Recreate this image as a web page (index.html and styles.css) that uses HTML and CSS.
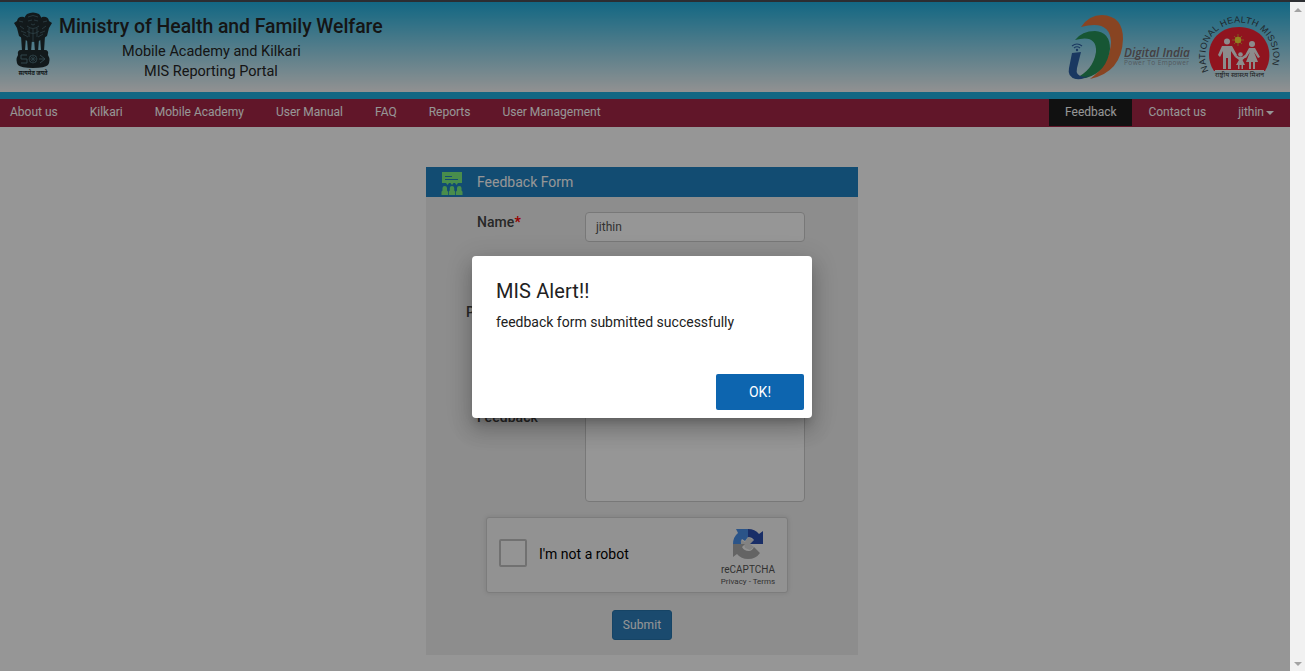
FILE: index.html
```html
<!DOCTYPE html>
<html lang="en">
<head>
<meta charset="utf-8">
<title>MIS Reporting Portal</title>
<link rel="stylesheet" href="styles.css">
</head>
<body>
<div class="window">
  <div class="topline"></div>
  <div class="viewport">
    <div class="page">
      <header class="masthead">
        <svg class="emblem" width="38" height="66" viewBox="0 0 38 66">
          <g fill="#202b2e">
            <path d="M13 2Q19-1 25 2Q28 5 28 11L29 27Q19 33 9 27L10 11Q9 6 13 2Z"/>
            <path d="M10 5Q4 4 3 9L0 11L3 16L5 24L11 28L13 8ZM28 5Q34 4 35 9L38 11L35 16L33 24L27 28L25 8Z"/>
            <path d="M7 24H12L11 39H8ZM13 27H18L17 40H14ZM20 27H25L24 40H21ZM26 24H31L30 39H27Z"/>
            <path d="M7 38H31Q35 38 34 43Q37 48 34 53Q31 56 19 56Q7 56 4 53Q1 48 4 43Q3 38 7 38Z"/>
          </g>
          <g fill="none" stroke="#527681" stroke-width=".7">
            <path d="M14 5Q19 2 24 5M14 9L18 8M20 8L24 9M17 12Q19 14 21 12M13 14Q19 19 25 14M13 19Q19 24 25 19M15 16V25M23 16V25M5 9L9 10M6 14L10 17M33 9L29 10M32 14L28 17M9 22L14 25M29 22L24 25M19 17V30M7 19L12 21M31 19L26 21"/>
            <path stroke-width="1" d="M13 43H7V47H13V51H7M26 43L31 47M26 51L31 47H25"/><circle cx="19" cy="47" r="4"/><path d="M15 47H23M19 43V51M16 44L22 50M22 44L16 50"/>
          </g>
          <text x="4.500" y="63" class="motto" textLength="29" lengthAdjust="spacingAndGlyphs">सत्यमेव जयते</text>
        </svg>
        <div class="titles">
          <div class="ministry">Ministry of Health and Family Welfare</div>
          <div class="academy">Mobile Academy and Kilkari</div>
          <div class="portal">MIS Reporting Portal</div>
        </div>
        <svg class="digital" width="124" height="68" viewBox="0 0 124 68">
          <path fill="#e8743b" d="M13 13Q21 1 34 1Q55 2 55 25Q54 58 22 65Q42 50 43 28Q42 5 13 13Z"/>
          <path fill="#279259" d="M7 26Q14 17 27 17Q42 18 42 35Q39 58 18 64L6 65Q25 57 28 38Q29 20 7 26Z"/>
          <path fill="#2d60a5" d="M4 39L13 38L9 54Q7 62 16 63L22 61Q15 66 8 65Q-1 63 1 54Z"/>
          <g fill="none" stroke="#2d60a5" stroke-width="1.200"><path d="M4 32Q9 28 14 32M6 34Q9 31.500 12 34"/></g><circle cx="9" cy="36" r="1.200" fill="#2d60a5"/>
          <text x="56" y="42.500" class="di-name" textLength="66" lengthAdjust="spacingAndGlyphs">Digital India</text>
          <path d="M56 44.500H121" stroke="#746b70" stroke-width=".5"/>
          <text x="56" y="51" class="di-tag" textLength="65">Power To Empower</text>
        </svg>
        <svg class="nhm" width="82" height="64" viewBox="0 0 82 64">
          <defs><path id="arc" d="M9.500 54A34 34 0 1 1 71 54"/></defs>
          <path fill="#f52335" d="M15 54C3 36 13 10 40 10S77 36 66 54Z"/>
          <path d="M16 53.500H65" stroke="#eee" stroke-width="1"/>
          <text class="nhm-arc"><textPath href="#arc" textLength="130">NATIONAL HEALTH MISSION</textPath></text>
          <path d="M39 17V29M33 23H45M35 19L43 27M43 19L35 27" stroke="#d5b735" stroke-width=".8"/><circle cx="39" cy="23" r="3.200" fill="#f6dc35"/>
          <g fill="#efefef">
            <circle cx="28" cy="24.500" r="3"/><path d="M23 29H33L38 38L36 40L32 34V52H29V41H27V52H24V34L21 40L19 38Z"/>
            <circle cx="53" cy="27" r="3"/><path d="M50 31H56L61 40L59 41L55 35L59 45H56V52H54V45H52V52H50V45H47L51 35L47 41L45 40Z"/>
            <circle cx="41.500" cy="37.500" r="2.300"/><path d="M40 40H43L46 38L47 40L43.500 43L46 48H44V52H42.500V48H40.500V52H39V48H37L40 43L36 40L37 38Z"/>
          </g>
          <text x="16" y="60" class="nhm-hi" textLength="49" lengthAdjust="spacingAndGlyphs">राष्ट्रीय स्वास्थ्य मिशन</text>
        </svg>
      </header>
      <nav class="nav">
        <a>About us</a><a>Kilkari</a><a>Mobile Academy</a><a>User Manual</a><a>FAQ</a><a>Reports</a><a>User Management</a>
        <span class="spacer"></span>
        <a class="active">Feedback</a><a>Contact us</a><a class="user">jithin<i class="caret"></i></a>
      </nav>
      <main class="panel">
        <div class="panel-head">
          <svg width="22" height="24" viewBox="0 0 22 24" fill="#7cf082"><path d="M1 0H21V11H17L15.500 13L14 11H12.500L11 13L9.500 11H8L6.500 13L5 11H1Z"/><path d="M4 4.500H11M4 7.500H17" stroke="#2082c2" stroke-width="1.200"/><path d="M.5 23V20Q.5 19 1.500 18.500V16Q1.500 14 3.700 14Q6 14 6 16V18.500Q7 19 7 20V23ZM7.800 23V20Q7.800 19 8.800 18.500V16Q8.800 14 11 14Q13.200 14 13.200 16V18.500Q14.200 19 14.200 20V23ZM15 23V20Q15 19 16 18.500V16Q16 14 18.300 14Q20.500 14 20.500 16V18.500Q21.500 19 21.500 20V23Z"/></svg>
          <span>Feedback Form</span>
        </div>
        <div class="row name-row"><label>Name<b>*</b></label><div class="input">jithin</div></div>
        <div class="row phone-row"><label>P</label></div>
        <div class="row text-row"><label>Feedback</label><div class="input area"></div></div>
        <div class="captcha">
          <span class="check"></span><span class="robot">I'm not a robot</span>
          <div class="brand">
            <svg width="32" height="32" viewBox="0 0 32 32">
              <path fill="#ddd" d="M9 12L13 14L16 9L22 12L18 16L22 19L18 22L13 20L12 16H9Z"/>
              <path fill="#4a90e8" d="M4 1H16V9L13 13L10 11Q8 13 9 16H1Q1 9 6 5Z"/>
              <path fill="#2c4eb0" d="M16 1Q23 1 27 6L31 3V16H18L22 12Q20 9 16 9Z"/>
              <path fill="#ababab" d="M1 16H13L10 19Q12 23 17 23Q20 23 22 19L28 25Q24 31 16 31Q9 31 5 26L1 29Z"/>
            </svg>
            <span class="rc">reCAPTCHA</span><span class="terms">Privacy - Terms</span>
          </div>
        </div>
        <div class="submit">Submit</div>
      </main>
    </div>
    <div class="scrollbar"><i class="up"></i><i class="down"></i></div>
  </div>
  <div class="backdrop">
    <section class="dialog">
      <h2>MIS Alert!!</h2>
      <p>feedback form submitted successfully</p>
      <div class="ok">OK!</div>
    </section>
  </div>
</div>
</body>
</html>
```
FILE: styles.css
```css
*{box-sizing:border-box}
body{margin:0;font-family:Roboto,"Noto Sans",sans-serif;overflow:hidden}
.window{position:relative;width:1305px;height:671px;overflow:hidden}
.topline{height:2px;background:#2c2e32}
.viewport{display:flex;height:669px}
.page{width:1290px;background:#fff}
.masthead{display:flex;height:97px;background:linear-gradient(#20b0df,#f7f7f7);border-bottom:7px solid #20b0df;padding-left:14px}
.emblem{margin-top:10px;flex:none;overflow:visible}
.motto{font:bold 6px "Noto Sans",sans-serif;fill:#202b2e}
.titles{width:324px;margin:13px 0 0 7px;color:#242424;white-space:nowrap;flex:none}
.ministry{font-size:19.4px;font-weight:500;line-height:24px;letter-spacing:-.04px}
.academy{font-size:14.5px;line-height:20px;margin:3px 0 0 63px}
.portal{font-size:14.5px;line-height:20px;margin:0 0 0 85px}
.digital{margin:12px 0 0 685px;flex:none;overflow:visible}
.di-name{font:italic 600 12px "Open Sans",sans-serif;fill:#746b70}
.di-tag{font:6.5px "Open Sans",sans-serif;fill:#8e979f}
.nhm{margin:15px 0 0 7px;flex:none;overflow:visible}
.nhm-arc{font:9px "Liberation Sans",sans-serif;fill:#34424b}
.nhm-hi{font:6px "Noto Sans",sans-serif;fill:#383838}
.nav{display:flex;height:28px;background:#a52646;color:#fff;font-size:12px;line-height:26px;padding-left:10px}
.nav a{margin-right:32px}
.nav .spacer{flex:1}
.nav .active{height:27px;background:#1e1e1e;width:83px;text-align:center;margin-right:16px}
.nav .user{margin-right:16px}
.caret{display:inline-block;border:4px solid transparent;border-top-color:#fff;border-bottom:0;margin-left:2px;vertical-align:1px}
.panel{width:432px;height:488px;background:#f0f0f0;margin:40px 0 0 426px;display:flex;flex-direction:column}
.panel-head{height:30px;background:#2082c2;color:#fff;display:flex;padding:5px 0 0 15px;font-size:14px;line-height:20px;flex:none}
.panel-head span{margin-left:14px}
.row{display:flex;padding-left:51px}
.row label{width:108px;font-size:14px;font-weight:500;line-height:20px;color:#444;letter-spacing:.05px;white-space:nowrap}
.row b{color:#f00}
.input{width:220px;height:30px;border:1px solid #ccc;border-radius:4px;background:#fff;padding:0 10px;font-size:12px;line-height:28px;color:#555}
.name-row{margin-top:15px;height:30px}
.phone-row{margin-top:60px;padding-left:40px;height:20px}
.text-row{margin-top:80px;height:100px}
.text-row label{padding-top:5px}
.area{height:100px}
.captcha{width:302px;height:76px;margin:15px 0 0 60px;border:1px solid #d3d3d3;border-radius:3px;background:#f9f9f9;box-shadow:0 0 4px 1px rgba(0,0,0,.08);display:flex;align-items:flex-start}
.check{width:28px;height:28px;margin:21px 0 0 12px;border:2px solid #c1c1c1;border-radius:2px;background:#fcfcfc}
.robot{font-size:14px;line-height:20px;margin:26px 0 0 12px;width:174px}
.brand{width:70px;display:flex;flex-direction:column;align-items:center;color:#555;padding-top:10px}
.rc{font-size:10px;line-height:13px;margin-top:3px}
.terms{font-size:8px;line-height:12px}
.submit{width:60px;height:30px;margin:17px 0 0 186px;border:1px solid #2674ac;border-radius:3px;background:#2d7ebb;color:#fff;font-size:12px;line-height:28px;text-align:center;letter-spacing:.1px}
.scrollbar{width:15px;background:#f1f1f1;display:flex;flex-direction:column;justify-content:space-between;align-items:center;padding:6px 0 5px}
.up,.down{border:4px solid transparent}
.up{border-top:0;border-bottom-color:#a3a3a3}
.down{border-bottom:0;border-top-color:#a3a3a3}
.backdrop{position:absolute;left:0;top:2px;width:1290px;height:669px;background:rgba(0,0,0,.41)}
.dialog{width:340px;height:162px;margin:254px 0 0 472px;background:#fff;border-radius:4px;padding:23px 8px 8px 24px;color:#212121;box-shadow:0 7px 8px -4px rgba(0,0,0,.2),0 13px 19px 2px rgba(0,0,0,.14),0 5px 24px 4px rgba(0,0,0,.12);display:flex;flex-direction:column}
.dialog h2{font-size:20px;font-weight:400;line-height:24px;margin:0;letter-spacing:.1px}
.dialog p{font-size:14px;line-height:20px;margin:9px 0 42px}
.ok{align-self:flex-end;width:88px;height:36px;background:#0d65af;color:#fff;border-radius:2px;text-align:center;font-size:14px;line-height:36px}
```
